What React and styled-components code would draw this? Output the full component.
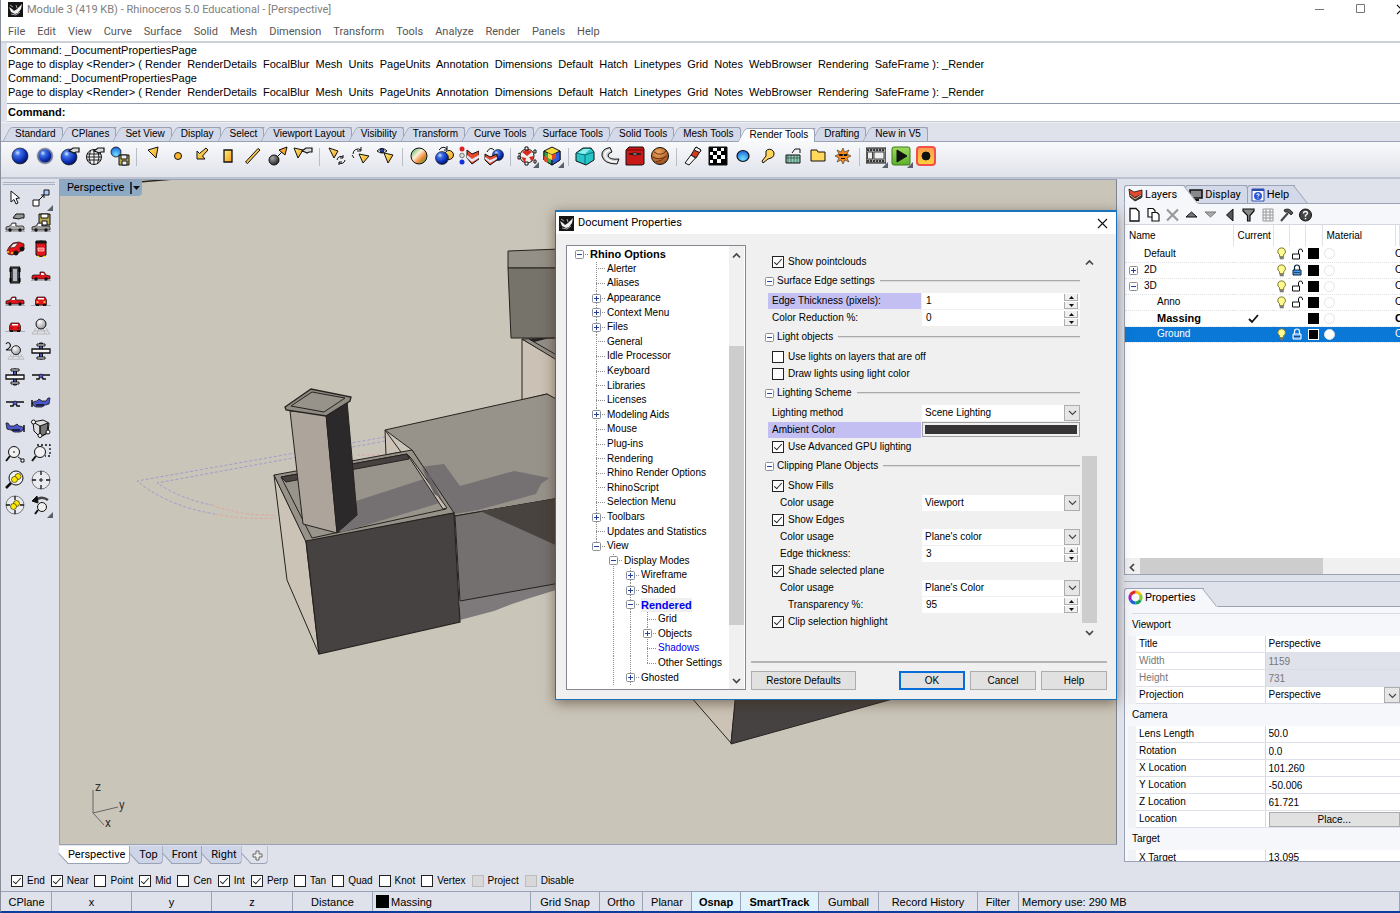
import React from "react";
import styled, { createGlobalStyle, css } from "styled-components";

const UI = `"Liberation Sans", Arial, sans-serif`;
const SYS = `Roboto, "Open Sans", sans-serif`;
const EDGE = "#9aa3b5";
const FACE = "#dfe2ea";

const Global = createGlobalStyle`
  *, *::before, *::after { box-sizing: border-box; }
  html, body { margin: 0; height: 100%; overflow: hidden; }
  #root { height: 100%; }
  button, input, select { font: inherit; color: inherit; margin: 0; padding: 0; border: 0; background: none; border-radius: 0; }
  a { color: inherit; text-decoration: none; }
  ul { list-style: none; margin: 0; padding: 0; }
  table { border-collapse: collapse; border-spacing: 0; }
  svg { display: block; flex: none; }
`;

/* ---------- window frame ---------- */
const Window = styled.div`
  height: 100%;
  display: flex;
  flex-direction: column;
  background: ${FACE};
  border-left: 1px solid #8a8f9c;
  border-bottom: 2px solid #0a3d9e;
  font: 10px/14px ${UI};
  color: #000;
  overflow: hidden;
`;
const TitleBar = styled.header`
  height: 19px;
  display: flex;
  align-items: center;
  gap: 4px;
  padding-left: 7px;
  background: #fff;
  font: 11px/16px ${SYS};
  color: #808080;
`;
const TitleText = styled.span`flex: 1;`;
const Caption = styled.button`
  width: 41px;
  height: 18px;
  display: grid;
  place-items: center;
`;
const Captions = styled.div`display: flex; margin-right: -22px;`;
const MenuBar = styled.nav`
  height: 24px;
  display: flex;
  align-items: center;
  gap: 12px;
  padding: 3px 0 0 7px;
  background: #fff;
  border-bottom: 2px solid #cdd1da;
  font: 11px/16px ${SYS};
  color: #555;
`;
const CommandArea = styled.section`
  height: 79px;
  margin-left: 6px;
  display: flex;
  flex-direction: column;
  background: #fff;
  border-bottom: 1px solid #c5cad6;
  font: 11px/14px ${UI};
`;
const History = styled.div`flex: 1; white-space: pre; padding-left: 1px;`;
const Prompt = styled.label`
  height: 18px;
  display: flex;
  align-items: center;
  border-top: 1px solid #8e98a8;
  padding: 0 0 2px 1px;
  font-weight: bold;
`;
const PromptInput = styled.input`flex: 1; outline: none;`;

/* ---------- toolbar tabs ---------- */
const ToolTabs = styled.div`
  height: 20px;
  display: flex;
  align-items: flex-end;
  padding-left: 5px;
  border-top: 1px solid #eceef3;
  border-bottom: 1px solid ${EDGE};
`;
const ToolTab = styled.button`
  position: relative;
  height: 14px;
  padding: 0 7px 0 9px;
  margin-bottom: ${p => (p.$on ? "-1px" : 0)};
  z-index: ${p => (p.$on ? 1 : 0)};
  font: 10px/14px ${UI};
  white-space: nowrap;
  &::before {
    content: "";
    position: absolute;
    z-index: -1;
    inset: 0 0 0 4px;
    transform: skewX(-28deg);
    transform-origin: 0 0;
    background: ${p => (p.$on ? "#fbfcfd" : "#d3d9e9")};
    border-left: 1px solid ${EDGE};
    border-top: 1px solid ${EDGE};
    border-top-left-radius: 3px;
  }
  &::after {
    content: "";
    position: absolute;
    z-index: -1;
    inset: 0 0 0 auto;
    width: 10px;
    background: ${p => (p.$on ? "#fbfcfd" : "#d3d9e9")};
    border-top: 1px solid ${EDGE};
    border-right: 1px solid ${EDGE};
    border-top-right-radius: 3px;
  }
`;
const Toolbar = styled.div`
  height: 37px;
  display: flex;
  align-items: flex-start;
  padding: 2px 0 0 7px;
  background: linear-gradient(#f8f9fb, #dfe2ea);
  border-bottom: 2px solid #bcc2d0;
`;
const ToolGroup = styled.div`
  display: flex;
  gap: 1px;
  & + & {
    margin-left: 4px;
    padding-left: 5px;
    background: linear-gradient(#b9bdc6, #b9bdc6) 0 4px / 1px 18px no-repeat;
  }
`;
const ToolButton = styled.button`
  position: relative;
  width: 24px;
  height: 24px;
  display: grid;
  place-items: center;
  &::after {
    content: "";
    display: ${p => (p.$fly ? "block" : "none")};
    position: absolute;
    right: 0;
    bottom: 0;
    border: 3px solid transparent;
    border-right-color: #5a5f6b;
    border-bottom-color: #5a5f6b;
  }
`;

/* ---------- body ---------- */
const Body = styled.main`
  flex: 1;
  min-height: 0;
  display: grid;
  grid-template-columns: 58px minmax(0, 1fr) 283px;
`;
const SideBar = styled.aside`padding: 3px 4px 0 2px;`;
const SideGrip = styled.div`height: 3px; border: 1px solid #a9b2c4; border-width: 1px 0;`;
const SideGrid = styled.div`
  height: 333px;
  display: grid;
  grid-template-columns: 24px 24px;
  column-gap: 2px;
  grid-auto-rows: 1fr;
`;
const SideButton = styled(ToolButton)`height: auto;`;
const Stage = styled.section`
  display: flex;
  flex-direction: column;
  min-height: 0;
  position: relative;
`;
const Viewport = styled.div`
  flex: 1;
  min-height: 0;
  position: relative;
  background: #cac5b9;
  border: 1px solid ${EDGE};
  border-right-color: #7f8490;
  overflow: hidden;
`;
const Scene = styled.svg`position: absolute; inset: 0; width: 100%; height: 100%;`;
const ViewportTitle = styled.button`
  position: absolute;
  left: 0;
  top: 0;
  height: 16px;
  display: flex;
  align-items: center;
  gap: 5px;
  padding: 0 1px 0 7px;
  background: #8ea9c4;
  font: 11px/16px ${SYS};
  border-bottom-right-radius: 4px;
`;
const ViewTabs = styled.div`height: 20px; display: flex; padding-top: 1px;`;
const ViewTab = styled.button`
  position: relative;
  height: 18px;
  padding: 0 5px 0 9px;
  font: 11px/18px ${SYS};
  z-index: 0;
  &::before {
    content: "";
    position: absolute;
    z-index: -1;
    inset: 0;
    clip-path: polygon(0 0, 100% 0, 100% 100%, 9px 100%, 0 8px);
    background: ${p => (p.$on ? "#fff" : p.$plus ? FACE : "#ced5e8")};
    border-right: 1px solid ${EDGE};
    border-bottom: 1px solid ${EDGE};
    border-bottom-right-radius: 4px;
  }
  &::after {
    content: "";
    position: absolute;
    left: 0;
    top: 7px;
    width: 14px;
    height: 1px;
    background: ${EDGE};
    transform: rotate(47deg);
    transform-origin: 0 0;
  }
`;

/* ---------- right panels ---------- */
const RightColumn = styled.aside`
  display: flex;
  flex-direction: column;
  padding: 6px 0 3px 7px;
  min-height: 0;
`;
const PanelTabs = styled.div`height: 19px; display: flex; border-bottom: 1px solid ${EDGE};`;
const PanelTab = styled.button`
  position: relative;
  z-index: ${p => (p.$on ? 2 : 1)};
  height: 19px;
  display: flex;
  align-items: center;
  gap: 2px;
  padding: 0 ${p => (p.$on ? 8 : 6)}px 0 4px;
  font: 11px/18px ${SYS};
  &::before {
    content: "";
    position: absolute;
    z-index: -1;
    inset: 0 0 0 0;
    background: ${p => (p.$on ? "#f6f7fa" : "#d3d9e9")};
    border: 1px solid ${EDGE};
    border-width: 1px 0 0 1px;
    border-bottom: 1px solid ${p => (p.$on ? "#f6f7fa" : EDGE)};
    border-radius: 3px 0 0 0;
  }
  &::after {
    content: "";
    position: absolute;
    z-index: -1;
    top: 0;
    right: -6px;
    width: 14px;
    height: 19px;
    background: ${p => (p.$on ? "#f6f7fa" : "#d3d9e9")};
    border-top: 1px solid ${EDGE};
    border-right: 1px solid ${EDGE};
    border-bottom: 1px solid ${p => (p.$on ? "#f6f7fa" : EDGE)};
    transform: skewX(38deg);
  }
`;
const LayerPanel = styled.section`
  height: 371px;
  display: flex;
  flex-direction: column;
  background: #fff;
  border: 1px solid ${EDGE};
  border-width: 0 0 1px 1px;
  overflow: hidden;
`;
const LayerTools = styled.div`
  height: 21px;
  display: flex;
  align-items: center;
  background: #f6f7fa;
  border-bottom: 1px solid #d5d8e0;
`;
const LayerTool = styled.button`width: 19px; height: 18px; display: grid; place-items: center;`;
const LayerTable = styled.table`
  width: 100%;
  table-layout: fixed;
  font: 10px/14px ${UI};
  th { height: 21px; font-weight: normal; text-align: left; padding: 0 4px; border-right: 1px solid #dfe1e6; white-space: nowrap; }
  td { height: 16px; padding: 0; white-space: nowrap; overflow: hidden; border-bottom: 1px dotted #e2e2e2; }
`;
const LayerRow = styled.tr`
  font-weight: ${p => (p.$bold ? "bold" : "normal")};
  font-size: ${p => (p.$bold ? "11px" : "10px")};
  background: ${p => (p.$sel ? "#0a78d7" : "#fff")};
  color: ${p => (p.$sel ? "#fff" : "#000")};
`;
const LayerName = styled.div`
  display: flex;
  align-items: center;
  padding-left: ${p => 4 + p.$depth * 13}px;
  gap: 5px;
`;
const Twist = styled.span`width: 10px; flex: none;`;
const Center = styled.div`display: grid; place-items: center;`;
const Swatch = styled.div`
  width: 11px;
  height: 11px;
  margin: auto;
  background: #000;
  border: ${p => (p.$sel ? "1px solid #fff" : 0)};
`;
const Disc = styled.div`
  width: 11px;
  height: 11px;
  margin-left: 2px;
  border-radius: 50%;
  background: #fff;
  border: 1px solid #e4e4e4;
`;
const HScroll = styled.div`
  height: 16px;
  margin-top: auto;
  display: grid;
  grid-template-columns: 15px 183px 1fr;
  align-items: center;
  background: #f0f0f0;
`;
const ScrollThumb = styled.div`height: 100%; background: #cdcdcd;`;
const PropTabs = styled(PanelTabs)`
  margin-top: 6px;
  height: 26px;
  padding-top: 6px;
  border-top: 1px solid #a9b2c4;
`;
const PropPanel = styled.section`
  flex: 1;
  min-height: 0;
  overflow: hidden;
  padding: 6px 0 0 3px;
  background: #f6f7fa;
  border: 1px solid ${EDGE};
  border-width: 0 0 1px 1px;
`;
const PropTable = styled.table`
  width: 100%;
  table-layout: fixed;
  border-top: 1px solid #d8dce6;
  font: 10px/14px ${UI};
  th { text-align: left; font-weight: normal; padding: 0; }
`;
const GroupHead = styled.th`height: 22px;`;
const PropLabel = styled.th`
  height: 17px;
  border-left: 8px solid #f1f2f6;
  border-bottom: 1px solid #dfe1ea;
  background: #fff;
  color: ${p => (p.$dim ? "#777" : "#000")};
  span { padding-left: 3px; }
`;
const PropValue = styled.td`
  height: 17px;
  padding: 0 0 0 3px;
  border-left: 1px solid #d5d9e4;
  border-bottom: 1px solid ${p => (p.$dim ? "#d9dce6" : "#dfe1ea")};
  background: ${p => (p.$dim ? FACE : "#fff")};
  color: ${p => (p.$dim ? "#777" : "#000")};
`;
const PropInput = styled.input`width: 100%; height: 16px; display: block;`;
const PlaceButton = styled.button`
  display: block;
  width: 100%;
  height: 15px;
  background: #e1e1e1;
  border: 1px solid #adadad;
`;

/* ---------- combo, spinner, tick box ---------- */
const ComboBox = styled.div`
  height: 16px;
  display: grid;
  grid-template-columns: 1fr 16px;
  background: #fff;
`;
const ComboSelect = styled.select`
  appearance: none;
  grid-area: 1 / 1 / 2 / 3;
  padding-left: ${p => p.$pad || 0}px;
  outline: none;
`;
const ComboArrow = styled.span`
  grid-area: 1 / 2;
  pointer-events: none;
  display: grid;
  place-items: center;
  background: #e6e6e6;
  border: 1px solid #adadad;
`;
const Tick = styled.input`
  appearance: none;
  position: relative;
  width: 12px;
  height: 12px;
  flex: none;
  background: ${p => (p.disabled ? "#d8d8d8" : "#fff")};
  border: 1px solid ${p => (p.disabled ? "#bcbcbc" : "#222")};
  &:checked::after {
    content: "";
    position: absolute;
    left: 3px;
    top: 0;
    width: 4px;
    height: 8px;
    border: solid #222;
    border-width: 0 1px 1px 0;
    transform: rotate(42deg);
  }
`;
const TickLabel = styled.label`
  display: flex;
  align-items: center;
  gap: 4px;
  white-space: nowrap;
`;

/* ---------- dialog ---------- */
const Dialog = styled.section`
  position: absolute;
  z-index: 5;
  right: 0;
  top: 31px;
  width: 562px;
  height: 490px;
  display: flex;
  flex-direction: column;
  background: #f0f0f0;
  border: 1px solid #1a73bd;
  border-top-width: 2px;
  box-shadow: 0 3px 12px rgba(60, 40, 20, 0.55);
`;
const DialogTitle = styled.header`
  height: 22px;
  display: flex;
  align-items: center;
  gap: 4px;
  padding: 0 8px 0 3px;
  background: #fff;
  font: 11px/16px ${SYS};
`;
const DialogName = styled.h1`margin: 0; flex: 1; font: inherit;`;
const DialogBody = styled.div`
  flex: 1;
  min-height: 0;
  display: grid;
  grid-template-columns: 180px minmax(0, 1fr);
  gap: 5px;
  padding: 11px 9px 9px 10px;
`;
const TreeBox = styled.div`
  display: grid;
  grid-template-columns: minmax(0, 1fr) 15px;
  background: #fff;
  border: 1px solid #828790;
  overflow: hidden;
  padding-right: 1px;
`;
const Tree = styled.ul`
  height: 438px;
  margin-top: 1px;
  padding-left: 3px;
  display: grid;
  grid-auto-rows: 1fr;
  font: 10px/14px ${UI};
`;
const Branch = styled.li`display: flex; align-items: center; min-height: 0; white-space: nowrap;`;
const dotsV = "repeating-linear-gradient(#8c8c8c 0 1px, transparent 1px 2px)";
const dotsH = "repeating-linear-gradient(90deg, #8c8c8c 0 1px, transparent 1px 2px)";
const Guide = styled.span`
  align-self: stretch;
  width: 17px;
  background: ${p => (p.$line ? `${dotsV} 9px 0 / 1px 100% no-repeat` : "none")};
`;
const Joint = styled.span`
  align-self: stretch;
  width: 20px;
  display: flex;
  align-items: center;
  padding-left: 5px;
  background: ${dotsH} 9px 50% / 9px 1px no-repeat,
    ${dotsV} 9px 0 / 1px ${p => (p.$end ? "50%" : "100%")} no-repeat;
  ${p => p.$root && css`background: ${dotsH} 9px 50% / 9px 1px no-repeat;`}
`;
const Leaf = styled.button`
  line-height: 14px;
  ${p => p.$bold && css`font: bold 11px/14px ${UI};`}
  color: ${p => (p.$blue ? "#0000f0" : "#000")};
  background: ${p => (p.$mark ? "#efefef" : "none")};
`;
const VScroll = styled.div`
  display: grid;
  grid-template-rows: ${p => p.$rows};
  background: #f0f0f0;
`;
const VThumb = styled.div`background: #cdcdcd;`;
const ArrowBox = styled.button`
  display: grid;
  place-items: center;
  width: 100%;
  height: 18px;
  align-self: ${p => (p.$end ? "end" : "start")};
`;

const Page = styled.div`display: flex; flex-direction: column;`;
const Settings = styled.div`
  height: 387px;
  margin-top: 8px;
  display: grid;
  grid-template-columns: minmax(0, 1fr) 15px;
  gap: 2px;
  padding: 0 10px 0 14px;
`;
const SettingsList = styled.div`font: 10px/14px ${UI};`;
const GroupTitle = styled.h2`
  height: 22px;
  margin: 0;
  display: flex;
  align-items: center;
  gap: 3px;
  font: inherit;
  &::after { content: ""; flex: 1; margin-left: 2px; height: 2px; background: #a9a9a9; border-bottom: 1px solid #dcdcdc; }
`;
const SettingRow = styled.div`
  height: 17px;
  display: grid;
  grid-template-columns: 154px minmax(0, 1fr);
  padding-left: 3px;
  align-items: center;
`;
const SettingLabel = styled.label`
  height: 16px;
  line-height: 16px;
  margin-right: 1px;
  padding-left: ${p => 4 + p.$indent * 8}px;
  background: ${p => (p.$mark ? "#c3bff2" : "none")};
`;
const TickRow = styled(TickLabel)`height: 17px; padding-left: 7px;`;
const SpinBox = styled.div`
  height: 16px;
  display: grid;
  grid-template-columns: minmax(0, 1fr) 14px;
  padding-right: 2px;
  background: #fff;
`;
const SpinInput = styled.input`padding-left: 4px; outline: none;`;
const SpinButtons = styled.span`display: grid; grid-template-rows: 7px 7px; gap: 1px; padding-top: 1px;`;
const SpinButton = styled.button`
  display: grid;
  place-items: center;
  background: #f0f0f0;
  border: 1px solid #adadad;
  border-top: 0;
`;
const ColorButton = styled.button`
  height: 15px;
  padding: 2px;
  background: #363435 content-box;
  background-color: #fff;
  border: 1px solid #a0a0a0;
  display: grid;
`;
const ColorFill = styled.span`background: #363435;`;
const Actions = styled.footer`
  margin-top: auto;
  height: 29px;
  display: flex;
  align-items: flex-end;
  gap: 5px;
  border-top: 2px solid #b4b4b4;
`;
const Push = styled.button`
  width: ${p => (p.$wide ? 105 : 66)}px;
  height: 19px;
  background: #e1e1e1;
  border: ${p => (p.$main ? "2px solid #0a6cd6" : "1px solid #adadad")};
  font: 10px/14px ${UI};
  margin-right: ${p => (p.$wide ? "auto" : 0)};
`;

/* ---------- bottom bars ---------- */
const SnapBar = styled.div`
  height: 26px;
  display: flex;
  align-items: center;
  gap: 6px;
  padding: 5px 0 0 10px;
`;
const StatusBar = styled.footer`
  height: 20px;
  display: flex;
  border-top: 1px solid ${EDGE};
  font: 11px/18px ${UI};
  padding-left: 1px;
`;
const Cell = styled.button`
  width: ${p => p.$w}px;
  flex: ${p => (p.$w ? "none" : 1)};
  display: flex;
  align-items: center;
  justify-content: ${p => (p.$left ? "flex-start" : "center")};
  padding-left: ${p => (p.$left ? 3 : 0)}px;
  border-right: 1px solid ${EDGE};
  background: ${p => (p.$on ? "#e0f3fc" : "none")};
  font-weight: ${p => (p.$on ? "bold" : "normal")};
  white-space: nowrap;
`;
const CellSwatch = styled.i`width: 13px; height: 13px; background: #000; margin-right: 2px;`;

/* ---------- drawings ---------- */
const Icon = ({ s = 20, v = 20, children }) => (
  <svg width={s} height={s} viewBox={`0 0 ${v} ${v}`} fill="none" stroke="#111" strokeWidth="1" aria-hidden="true">{children}</svg>
);
const HiddenSvg = styled.svg`position: absolute;`;
const Defs = () => (
  <HiddenSvg width="0" height="0" aria-hidden="true">
    <defs>
      <radialGradient id="blue" cx=".35" cy=".3" r=".75"><stop offset="0" stopColor="#d5e4ff" /><stop offset=".25" stopColor="#3c6fe8" /><stop offset=".7" stopColor="#0b2db0" /><stop offset="1" stopColor="#04104a" /></radialGradient>
      <radialGradient id="sky" cx=".5" cy=".75" r=".8"><stop offset="0" stopColor="#6fe0ff" /><stop offset="1" stopColor="#1257d8" /></radialGradient>
      <radialGradient id="white" cx=".35" cy=".3" r=".8"><stop offset="0" stopColor="#fff" /><stop offset="1" stopColor="#909090" /></radialGradient>
      <radialGradient id="dark" cx=".35" cy=".3" r=".8"><stop offset="0" stopColor="#aaa" /><stop offset="1" stopColor="#151515" /></radialGradient>
      <linearGradient id="rainbow" x2="1" y2="1"><stop offset="0" stopColor="#2fa84a" /><stop offset=".4" stopColor="#fff0d8" /><stop offset=".65" stopColor="#f08a3a" /><stop offset="1" stopColor="#18a020" /></linearGradient>
      <radialGradient id="wood" cx=".4" cy=".3" r=".8"><stop offset="0" stopColor="#f4a860" /><stop offset="1" stopColor="#8b3f12" /></radialGradient>
      <linearGradient id="gold" x2="1" y2="1"><stop offset="0" stopColor="#fff07a" /><stop offset="1" stopColor="#f39a12" /></linearGradient>
      <linearGradient id="play" x2="0" y2="1"><stop offset="0" stopColor="#9edb5b" /><stop offset="1" stopColor="#5cb02c" /></linearGradient>
      <linearGradient id="rec" x2="0" y2="1"><stop offset="0" stopColor="#ff9a50" /><stop offset="1" stopColor="#ffd23a" /></linearGradient>
    </defs>
  </HiddenSvg>
);
const Rhino = ({ s = 15 }) => (
  <Icon s={s} v={15}>
    <rect width="15" height="15" fill="#151515" stroke="none" />
    <path d="M1 5l3 2 2 2 3-2 5-5-1 5-3 4-3 1-4-2z" fill="#f0f0f0" stroke="none" />
    <path d="M8 3l1 3M3 12l5 1 4-3M2 3l3 2" stroke="#a8a8a8" />
  </Icon>
);
const hand = <path d="M9 5l4-3h6v4h-3l-2 1-2-1z" fill="#ddd" strokeWidth="1.2" />;
const cone = <path d="M3 2l9 3-4 7z" fill="url(#gold)" />;
const TOOL = {
  sphere: <circle cx="10" cy="10" r="8" fill="url(#blue)" strokeWidth=".6" />,
  blurSphere: <><circle cx="10" cy="10" r="8.5" fill="#8b93ad" stroke="none" opacity=".5" /><circle cx="10" cy="10" r="7" fill="url(#blue)" stroke="#6a7394" strokeWidth="1.500" /></>,
  handSphere: <><circle cx="9" cy="11" r="8" fill="url(#blue)" strokeWidth=".6" />{hand}</>,
  globe: <><circle cx="9" cy="11" r="7.5" fill="#f2f2f2" /><path d="M2 8h14M1.500 11h15M2 14h14M9 3.500v15M5.500 4.500q-3 6.500 0 13M12.500 4.500q3 6.500 0 13" strokeWidth=".9" />{hand}</>,
  saveSphere: <><circle cx="6" cy="6" r="5" fill="url(#sky)" strokeWidth=".8" /><path d="M9 9h10v10H9z" fill="#b9ab53" /><path d="M11 9h6v4h-6zM12 15h5v4h-5z" fill="#eee" /></>,
  spot: <path d="M5 4l10-3-2 11z" fill="url(#gold)" />,
  point: <circle cx="10" cy="10" r="3.500" fill="#ffb52b" />,
  arrow: <path d="M4 13V5l2.500 2.500L13 2l2 2-5.500 6L12 13z" fill="url(#gold)" />,
  rect: <path d="M6 4h8v12H6z" fill="url(#gold)" strokeWidth="1.300" />,
  line: <path d="M2.500 16L15 2.500 17 4 4.500 17.500z" fill="url(#gold)" />,
  aim: <><circle cx="6" cy="14" r="5" fill="url(#dark)" /><path d="M9 11l6-6" /><path d="M11 4l8-3-2 8z" fill="#ffa52b" /></>,
  coneHand: <><path d="M1 2l9 2-5 8z" fill="url(#gold)" />{hand}</>,
  coneSwap: <>{cone}<path d="M11 14a4 4 0 0 1 6-3M19 14a4 4 0 0 1-6 3M17 9v3h-3M13 19v-3h3" /></>,
  coneTurn: <><path d="M8 8l10 2-6 7z" fill="url(#gold)" /><path d="M2 8a5 5 0 0 1 8-4M3 12l-2-3M10 1v4H6" /></>,
  coneEye: <><path d="M8 7l9 2-5 8z" fill="url(#gold)" /><path d="M1 5q5-5 10 0q-5 4-10 0z" fill="#fff" /><circle cx="6" cy="4.500" r="2" fill="#2344c0" /></>,
  rainbow: <circle cx="10" cy="10" r="8" fill="url(#rainbow)" />,
  pair: <><circle cx="15" cy="9" r="4.500" fill="url(#gold)" /><circle cx="8" cy="12" r="6.500" fill="url(#blue)" strokeWidth=".6" /><path d="M5 4q4-5 8-1M13 0v4h-3" /></>,
  layerDots: <><circle cx="3" cy="3" r="2.500" fill="#e02020" stroke="none" /><circle cx="3" cy="9.500" r="2.300" fill="#ddd" strokeWidth=".5" /><circle cx="3" cy="16" r="2.500" fill="#1030e0" stroke="none" /><path d="M8 4l5 4 7-3v8l-7 5-5-6z" fill="#e8482b" /><path d="M8 9l5 4 7-4v3l-7 4-5-4z" fill="#dfe8f8" stroke="none" /></>,
  layerBall: <><circle cx="14" cy="9" r="5.500" fill="url(#blue)" strokeWidth=".6" /><path d="M1 8l5 3 7-3v6l-7 5-5-5z" fill="#e8482b" /><path d="M1 11l5 3 7-3v2l-7 4-5-4z" fill="#dfe8f8" stroke="none" /><path d="M3 6q3-6 7-2" /></>,
  cage: <><circle cx="10" cy="10" r="7" fill="#eee" /><path d="M5 6l5-3 5 3-5 4zM4 11l5 1-1 5zM12 11l5-1-2 6z" fill="#d92a1c" stroke="none" /><path d="M1 8l2-1M8 1h3v3H8zM17 4h2v3h-2zM1 10h2v3H1zM17 14h2v3h-2zM8 16h3v3H8z" fill="#fff" /></>,
  cube: <><path d="M10 1l8 4v9l-8 5-8-5V5z" fill="#f5d93b" /><path d="M2 5l8 4v10l-8-5z" fill="#3aa54b" /><path d="M10 9l8-4v9l-8 5z" fill="#2d5be0" /><path d="M10 9l4-2v5l-4 2zM2 10l4 2v5l-4-2z" fill="#e04a28" stroke="none" /><path d="M6 7l4 2v5l-4-2z" fill="#f5d93b" stroke="none" /></>,
  cyanBox: <><path d="M1 7l7-5h8l3 4v8l-8 5-10-4z" fill="#27c4c8" /><path d="M1 7l9 2v9M10 9l9-3" stroke="#0b6f78" /><path d="M3 7l6-4h6l-5 5z" fill="#8feef0" stroke="none" /></>,
  pipe: <><path d="M10 1.500Q1 3 2 10q2 8 15 8l2-5q-9 1-11-3 0-3 4-4z" fill="#d0d0d0" /><path d="M10 4q-6 2-5 6 2 6 12 6" stroke="#fff" strokeWidth="1.500" /></>,
  book: <><path d="M1 4l3-3h14l1 2v15l-2 1H1z" fill="#c81818" /><path d="M4 8q6-2 12 0q-6 2-12 0z" fill="#fff" /><path d="M1 4h18" stroke="#700" /></>,
  wood: <><circle cx="10" cy="10" r="8.500" fill="url(#wood)" /><path d="M4 6q7 5 12-1M3 11q6 4 14-1M6 16q6-1 9-5" stroke="#6b2f0c" /></>,
  tube: <><path d="M13 1l5 3-5 8-5-3z" fill="#d9381c" /><path d="M13 1l5 3-1.500 2.500L11 4zM8 9l4.500 3L6 19l-4-2z" fill="#f4f4f4" /></>,
  checker: <><path d="M1 1h18v18H1z" fill="#000" /><path d="M5 2h4v3H5zM13 2h3v3h-3zM9 5h4v4H9zM5 9h4v4H5zM13 9h4v4h-4zM2 6h3v3H2zM2 14h3v3H2zM9 13h4v4H9z" fill="#fff" stroke="none" /></>,
  ellipse: <ellipse cx="10" cy="10" rx="6" ry="5.500" fill="url(#sky)" strokeWidth="1.200" />,
  lamp: <path d="M8 5a4.500 4.500 0 1 1 5 7l-3 1-5 4-1-2 4-5z" fill="#ffd45a" />,
  ground: <><path d="M3 9h14v8H3z" fill="#8fd0b8" /><path d="M3 12h14M5 9v8M8 9v8M11 9v8M14 9v8" strokeWidth=".5" /><path d="M9 7l3-4h5v4" /></>,
  folder: <path d="M3 4h6l1 2h7v9H3z" fill="#ffd85a" />,
  sun: <><path d="M10 2l1.500 4L16 4l-2 4 4 2-4 2 2 4-4-2-2 4-2-4-4 2 2-4-4-2 4-2-2-4 4 2z" fill="#f58a1c" strokeWidth=".5" /><path d="M6.500 8.500h3v1h-3zM11 8.500h3v1h-3z" fill="#111" /><path d="M8 12.500h4" /></>,
  film: <><path d="M0 2h20v15H0z" fill="#aaa" /><path d="M1.500 6h5v7h-5zM8 6h10v7H8z" fill="#eee" stroke="#444" /><path d="M1 4h18M1 15h18" stroke="#111" strokeWidth="1.500" strokeDasharray="2 1" /></>,
  play: <><rect x="1" y="1" width="18" height="18" rx="2" fill="url(#play)" stroke="#3f7a1a" /><path d="M6 4l10 6-10 6z" fill="#111" /></>,
  rec: <><rect x="1" y="1" width="18" height="18" rx="3" fill="url(#rec)" stroke="#f05048" strokeWidth="2" /><circle cx="10" cy="10" r="4" fill="#111" /></>,
};
const TOOL_GROUPS = [
  ["sphere", "blurSphere", "handSphere", "globe", "saveSphere"],
  ["spot", "point", "arrow", "rect", "line", "aim", "coneHand"],
  ["coneSwap", "coneTurn", "coneEye"],
  ["rainbow", "pair", "layerDots", "layerBall"],
  ["cage", "cube"],
  ["cyanBox", "pipe", "book", "wood"],
  ["tube", "checker", "ellipse", "lamp", "ground", "folder", "sun"],
  ["film", "play", "rec"],
];
const FLYOUTS = ["cage", "cube", "film", "play", "moveBox", "undoZoom"];

/* pickup truck seen from the side, cab to the left of the bed */
const car = fill => (
  <>
    <path d="M0 15.500h20" stroke="#888" strokeWidth=".6" />
    <path d="M1 14v-3l4-1 2-3h4v3h7l1 1v3z" fill={fill} strokeWidth=".7" />
    <path d="M7.500 8h2.500v2H6.500z" fill="#fff" stroke="none" />
    <circle cx="5" cy="14" r="1.700" fill="#111" stroke="none" /><circle cx="15" cy="14" r="1.700" fill="#111" stroke="none" />
  </>
);
const carEnd = light => <><path d="M0 15.500h20" stroke="#888" strokeWidth=".6" /><path d="M6 7h8l1.500 3v5h-11v-5z" fill="#e0161c" strokeWidth=".7" /><path d="M7 8h6v1.500H7z" fill="#fff" stroke="none" /><path d="M5 15h3M12 15h3" strokeWidth="2" /><path d="M5.500 12h2M12.500 12h2" stroke={light} strokeWidth="1.500" /></>;
const planeFront = y => <><path d={`M1 ${y}h18M5 ${y + 4}h3l1-3h2l1 3h3`} strokeWidth="1.400" /><circle cx="10" cy={y + 1} r="2" fill="#4a58c8" strokeWidth=".6" /></>;
const planeSide = <><path d="M1 10q2-2 5-2l2-2 3 2h4l2-3h2l-1 6-4 1-3 2H5q-3-1-4-4z" fill="#4a58c8" strokeWidth=".8" /><path d="M1 7v7M5 12h8" strokeWidth="1.500" /></>;
const planeTop = <><path d="M8.500 2h3v16h-3z" fill="#4656c4" /><path d="M1 8h18v4H1z" fill="#f4f4f4" strokeWidth="1.300" /><path d="M6 3h8v2H6zM6 16h8v2H6z" fill="#fff" /></>;
const persp = <><path d="M5 12L1 18h18l-4-6M3 15h14M8 12l-2 6M12 12l2 6" stroke="#aaa" strokeWidth=".7" /><circle cx="10" cy="8" r="5" fill="url(#white)" /></>;
const lens = <><circle cx="9" cy="8" r="5.500" fill="#f1f1f1" /><path d="M5 12l-4 5" strokeWidth="2" /></>;
const target = <><circle cx="10" cy="10" r="9" stroke="#777" fill="#e9ebf0" /><path d="M10 1v4M10 15v4M1 10h4M15 10h4" strokeWidth="1.300" /></>;
const flip = g => <g transform="translate(20 0) scale(-1 1)">{g}</g>;
const SIDE = {
  pointer: <path d="M6 3v11l3-2.500 2 4.500 2-1-2-4.500 3.500-.5z" fill="#fff" />,
  moveBox: <><path d="M2 12h6v6H2z" fill="#fff" /><path d="M13 2h5v5h-5z" fill="#aecbff" /><path d="M8 12l5-5M10 7h3v3" /></>,
  handCar: <><g transform="translate(0 3)">{car("#aaa")}</g><path d="M8 5l3-4h8v4h-3l-2 1z" fill="#999" /></>,
  saveCar: <><path d="M8 1h11v11H8z" fill="#b9ab53" /><path d="M10 1h7v4h-7zM11 8h5v4h-5z" fill="#fff" /><g transform="translate(0 3)">{car("#999")}</g></>,
  carPersp: <><path d="M2 12l2-4 4-4 6-1 5 2v5l-6 4-6 2-4-1z" fill="#e0161c" strokeWidth=".7" /><path d="M8 5l5-1-3 4-5 1z" fill="#fff" strokeWidth=".5" /><circle cx="11" cy="14" r="2" fill="#111" /><circle cx="17" cy="10" r="2" fill="#111" /><path d="M2 13h2M6 14h2" stroke="#fd0" strokeWidth="1.500" /></>,
  carTop: <><path d="M5 3q5-2 10 0v13q-5 3-10 0z" fill="#e0161c" /><path d="M5 2h10v2H5z" fill="#222" /><path d="M7 9h6v3H7z" fill="#f66" stroke="#fff" strokeWidth=".6" /><path d="M6 17.500h2M12 17.500h2" stroke="#fd0" strokeWidth="1.500" /></>,
  carBottom: <><path d="M5.500 2h9v16h-9z" fill="#444" strokeWidth="1.200" /><path d="M8 4h4v12H8z" fill="#b4b8c6" stroke="none" /><path d="M5.500 3v4M14.500 3v4M5.500 13v4M14.500 13v4" stroke="#000" strokeWidth="2" /></>,
  carRight: flip(car("#e0161c")),
  carLeft: flip(flip(car("#e0161c"))),
  carFront: carEnd("#ffe14a"),
  carBack: carEnd("#800"),
  persp,
  persp2: <><g transform="translate(2 2) scale(.9)">{persp}</g><path d="M1 3q2-3 4 0t-4 6h5" strokeWidth="1.200" /></>,
  planeTop,
  planeBottom: <g transform="rotate(180 10 10)">{planeTop}</g>,
  planeFront: planeFront(8),
  planeBack: planeFront(9),
  planeRight: planeSide,
  planeLeft: flip(planeSide),
  boxEdit: <><path d="M2 4l10-2 6 3-1 10-8 4-6-6z" fill="#ddd" /><path d="M9 8l8-3-1 10-7 4z" fill="#777" /><path d="M2 4l7 4v11" /><circle cx="2.500" cy="4" r="2" fill="#fff" /><circle cx="17" cy="14" r="2" fill="#fff" /><circle cx="9" cy="17.500" r="2" fill="#fff" /></>,
  zoomDyn: <>{lens}<path d="M8 8h2M13 13l3 2" /><path d="M16 15h3v3h-3z" fill="#fff" /></>,
  zoomWin: <>{lens}<path d="M6 1h13v11h-5" strokeDasharray="2 2" strokeWidth="1.300" /></>,
  zoomSel: <><circle cx="11" cy="8" r="7" fill="#f1f1f1" /><path d="M6 13l-5 5" strokeWidth="2.500" /><circle cx="13" cy="6.500" r="3" fill="#ffe800" strokeWidth=".6" /><circle cx="9.500" cy="9.500" r="3" fill="#ffe800" strokeWidth=".6" /></>,
  target: <>{target}<path d="M9 9h2v2H9z" /></>,
  targetSel: <>{target}<circle cx="11.500" cy="8.500" r="3" fill="#ffe800" strokeWidth=".6" /><circle cx="8.500" cy="11.500" r="3" fill="#ffe800" strokeWidth=".6" /></>,
  undoZoom: <><circle cx="11" cy="12" r="4.500" fill="#eee" /><path d="M7 15l-3 4" strokeWidth="2" /><path d="M4 6q6-6 13-1" strokeWidth="2.500" stroke="#444" /><path d="M1 6l5-5 1 7z" fill="#111" /></>,
};
const SIDE_ORDER = ["pointer", "moveBox", "handCar", "saveCar", "carPersp", "carTop", "carBottom", "carRight", "carLeft", "carFront", "carBack", "persp", "persp2", "planeTop", "planeBottom", "planeFront", "planeBack", "planeRight", "planeLeft", "boxEdit", "zoomDyn", "zoomWin", "zoomSel", "target", "targetSel", "undoZoom"];

const LAYER_ICONS = {
  "New layer": <path d="M3 1.500h6l3 3V14H3z" fill="#fff" strokeWidth="1.300" />,
  "New sublayer": <><path d="M2 1.500h5l2 2V10H2z" fill="#fff" strokeWidth="1.200" /><path d="M6 5.500h5l2 2V14H6z" fill="#fff" strokeWidth="1.200" /></>,
  "Delete": <path d="M2 2.500l11 11M13 2.500l-11 11" stroke="#999" strokeWidth="2.200" />,
  "Move up": <path d="M2 10l5.500-5 5.500 5z" fill="#777" />,
  "Move down": <path d="M2 5l5.500 5L13 5z" fill="#aaa" stroke="#777" />,
  "Move out": <path d="M11 2v12L4.500 8z" fill="#555" />,
  "Filter": <path d="M2 2h11v2L9 8.500V14H6.500V8.500L2 4z" fill="#888" strokeWidth="1.200" />,
  "Columns": <path d="M3 2h10v12H3zM3 5h10M3 8h10M3 11h10M6 2v12M10 2v12" stroke="#999" />,
  "Tools": <><path d="M9 6l-7 8" strokeWidth="2" stroke="#444" /><path d="M5 3q5-3 9 3l-2 2-3-3-3 0z" fill="#555" strokeWidth=".8" /></>,
  "Help": <><circle cx="7.500" cy="8" r="6" fill="#444" /><path d="M5.500 6.500q0-2 2-2t2 1.800q0 1-2 2v1.400M7.500 11v1.300" stroke="#fff" strokeWidth="1.400" /></>,
};
const Bulb = () => <Icon s={13} v={12}><path d="M6 .8a3.400 3.400 0 0 1 2 6.300V9H4.200V7.100A3.400 3.400 0 0 1 6 .8z" fill="#fffb90" stroke="#77742a" strokeWidth=".9" /><path d="M4.700 9.500h3v1.500h-3z" fill="#999" stroke="#555" strokeWidth=".6" /></Icon>;
const Lock = ({ locked, light }) => (
  <Icon s={12} v={12}>
    {locked
      ? <><path d="M3.500 6V3.500a2.500 2.500 0 0 1 5 0V6" stroke={light ? "#fff" : "#123"} strokeWidth="1.200" /><path d="M2 6h8v5H2z" fill="#4a9cf0" stroke={light ? "#fff" : "#123"} /><path d="M3 8.500h6" stroke="#123" strokeWidth=".7" /></>
      : <><path d="M7.500 6V3a2 2 0 0 1 4 0v1" /><path d="M1.500 6h7v5h-7z" fill="#fff" /></>}
  </Icon>
);
const Expander = ({ open }) => (
  <Icon s={9} v={9}>
    <rect x=".5" y=".5" width="8" height="8" rx="1" fill="#fff" stroke="#8a8f99" />
    <path d={open ? "M2 4.500h5" : "M2 4.500h5M4.500 2v5"} stroke="#2440a0" />
  </Icon>
);
const Chevron = ({ dir = "down", bold }) => {
  const d = { down: "M1 3l3.500 3.500L8 3", up: "M1 6.500L4.500 3 8 6.500", left: "M6 1L2.500 4.500 6 8" }[dir];
  return <Icon s={9} v={9}><path d={d} stroke="#444" strokeWidth={bold ? 1.7 : 1.1} /></Icon>;
};
const CloseX = ({ s = 11 }) => <Icon s={s} v={11}><path d="M1 1l9 9M10 1l-9 9" strokeWidth="1.100" /></Icon>;

const Model = () => (
  <Scene viewBox="60 180 1056 665" preserveAspectRatio="xMinYMin slice" fill="none" stroke="#26221f" strokeWidth="1" aria-label="Rendered massing model">
    <path d="M139 182L174 179" strokeWidth="1.500" />
    <g strokeWidth=".7" strokeDasharray="3 2">
      <path d="M385 437L137 481q30 25 78 33M385 441L157 483q24 16 55 22" stroke="#8d89d8" />
      <path d="M212 505q30 11 64 10M215 514q30 6 61 4M357 455h28" stroke="#e39a90" />
    </g>
    <path d="M460 600L556 583V590L530 598 512 604 494 611 460 620z" fill="#7e7a7b" stroke="none" />
    <path d="M508 251L560 249V268H508z" fill="#949087" />
    <path d="M508 268H560V338H511z" fill="#76736b" />
    <path d="M522 339L560 361V402L547 394 522 400z" fill="#cbc1b4" />
    <path d="M522 339L560 338V362z" fill="#938f87" />
    <path d="M529 339L560 357" />
    <path d="M529 339h17l-12 3z" fill="#222" stroke="none" />
    <path d="M385 430L547 394 560 401V498L455 516 412 450z" fill="#97938b" />
    <path d="M385 430L401 452 386 455z" fill="#ccc3b6" />
    <path d="M420 467L444 464 460 486 514 471 525 473 549 478 541 484 536 494 478 510 455 514z" fill="#757173" stroke="none" />
    <path d="M455 516L560 498V583L460 601z" fill="#73706f" />
    <path d="M480 511L560 498V547z" fill="#48433f" stroke="none" />
    <path d="M274 475L306 541 319 654 287 580z" fill="#ccc3b7" />
    <path d="M274 475L412 450 454 513 306 542z" fill="#969289" />
    <path d="M281 477L407 454 446 509 312 538z" fill="#98948b" />
    <path d="M281 477L407 454 409 459 286 482z" fill="#474241" />
    <path d="M356 501L390 490 430 477 443 502 340 533z" fill="#757173" stroke="none" />
    <path d="M407 454L411 458 447 508 443 509z" fill="#c5bcae" />
    <path d="M422 468L430 476 441 498 434 494z" fill="#686466" stroke="none" />
    <path d="M306 541L454 513 460 622 319 654z" fill="#464241" strokeWidth="1.200" />
    <path d="M290 411L326 414 337 533 303 524z" fill="#ada59c" />
    <path d="M326 414L347 401 357 515 337 533z" fill="#2b292a" />
    <path d="M285 407L311 389 351 397 350 401 326 416 286 410z" fill="#8f8b83" strokeWidth="1.300" />
    <path d="M291 406L312 392 345 398 324 412z" fill="#97938b" />
    <path d="M690 696L736 696 731 743z" fill="#ccc3b6" />
    <path d="M736 690L925 690 731 744z" fill="#464241" />
    <path d="M93 813V790M93 813L118 807M93 813L104 825" stroke="#666" />
    <g fill="#333" stroke="none" fontFamily="Roboto, sans-serif" fontSize="12">
      <text x="95" y="791">z</text><text x="119" y="809">y</text><text x="105" y="827">x</text>
    </g>
  </Scene>
);

/* ---------- data ---------- */
const MENUS = ["File", "Edit", "View", "Curve", "Surface", "Solid", "Mesh", "Dimension", "Transform", "Tools", "Analyze", "Render", "Panels", "Help"];
const TABS = ["Standard", "CPlanes", "Set View", "Display", "Select", "Viewport Layout", "Visibility", "Transform", "Curve Tools", "Surface Tools", "Solid Tools", "Mesh Tools", "Render Tools", "Drafting", "New in V5"];
const PAGE_LINE = "Page to display <Render> ( Render  RenderDetails  FocalBlur  Mesh  Units  PageUnits  Annotation  Dimensions  Default  Hatch  Linetypes  Grid  Notes  WebBrowser  Rendering  SafeFrame ): _Render";
const HISTORY = ["Command: _DocumentPropertiesPage", PAGE_LINE, "Command: _DocumentPropertiesPage", PAGE_LINE];
/* depth, name, box: "+" closed, "-" open */
const TREE = [
  [0, "Rhino Options", "-"], [1, "Alerter"], [1, "Aliases"], [1, "Appearance", "+"], [1, "Context Menu", "+"], [1, "Files", "+"],
  [1, "General"], [1, "Idle Processor"], [1, "Keyboard"], [1, "Libraries"], [1, "Licenses"], [1, "Modeling Aids", "+"], [1, "Mouse"],
  [1, "Plug-ins"], [1, "Rendering"], [1, "Rhino Render Options"], [1, "RhinoScript"], [1, "Selection Menu"], [1, "Toolbars", "+"],
  [1, "Updates and Statistics"], [1, "View", "-"], [2, "Display Modes", "-"], [3, "Wireframe", "+"], [3, "Shaded", "+"], [3, "Rendered", "-"],
  [4, "Grid"], [4, "Objects", "+"], [4, "Shadows"], [4, "Other Settings"], [3, "Ghosted", "+"],
];
const LAYERS = [
  { name: "Default", depth: 0 },
  { name: "2D", depth: 0, box: "+", locked: true },
  { name: "3D", depth: 0, box: "-" },
  { name: "Anno", depth: 1 },
  { name: "Massing", depth: 1, current: true },
  { name: "Ground", depth: 1, locked: true, sel: true },
];
const PROPS = [
  ["Viewport", [["Title", "Perspective"], ["Width", "1159", "dim"], ["Height", "731", "dim"], ["Projection", "Perspective", "combo"]]],
  ["Camera", [["Lens Length", "50.0"], ["Rotation", "0.0"], ["X Location", "101.260"], ["Y Location", "-50.006"], ["Z Location", "61.721"], ["Location", "Place...", "button"]]],
  ["Target", [["X Target", "13.095"]]],
];
const SNAPS = [["End", 1], ["Near", 1], ["Point", 0], ["Mid", 1], ["Cen", 0], ["Int", 1], ["Perp", 1], ["Tan", 0], ["Quad", 0], ["Knot", 0], ["Vertex", 0], ["Project", -1], ["Disable", -1]];
const STATUS = [["CPlane", 50], ["x", 80], ["y", 80], ["z", 81], ["Distance", 80], ["Massing", 158], ["Grid Snap", 69], ["Ortho", 43], ["Planar", 49], ["Osnap", 49], ["SmartTrack", 78], ["Gumball", 60], ["Record History", 99], ["Filter", 41], ["Memory use: 290 MB", 0]];

/* ---------- pieces ---------- */
const Combo = ({ id, value, pad, label }) => (
  <ComboBox>
    <ComboSelect id={id} aria-label={label} defaultValue={value} $pad={pad}><option>{value}</option></ComboSelect>
    <ComboArrow><Chevron /></ComboArrow>
  </ComboBox>
);
const Spinner = ({ id, value }) => (
  <SpinBox>
    <SpinInput id={id} defaultValue={value} />
    <SpinButtons>
      <SpinButton aria-label="Increase"><Icon s={7} v={7}><path d="M1 5l2.500-3L6 5z" fill="#111" stroke="none" /></Icon></SpinButton>
      <SpinButton aria-label="Decrease"><Icon s={7} v={7}><path d="M1 2l2.500 3L6 2z" fill="#111" stroke="none" /></Icon></SpinButton>
    </SpinButtons>
  </SpinBox>
);
const Check = ({ label, on }) => <TickRow><Tick type="checkbox" defaultChecked={on} />{label}</TickRow>;
const Setting = ({ label, indent = 0, mark, id, children }) => (
  <SettingRow><SettingLabel htmlFor={id} $indent={indent} $mark={mark}>{label}</SettingLabel>{children}</SettingRow>
);
const Group = ({ children }) => <GroupTitle><Expander open />{children}</GroupTitle>;
const ScrollBar = ({ rows }) => (
  <VScroll $rows={rows}>
    <ArrowBox aria-label="Scroll up"><Chevron dir="up" bold /></ArrowBox>
    <VThumb />
    <ArrowBox $end aria-label="Scroll down"><Chevron bold /></ArrowBox>
  </VScroll>
);

const OptionTree = () => (
  <TreeBox>
    <Tree>
      {TREE.map(([depth, name, box]) => (
        <Branch key={name}>
          {Array.from({ length: depth }, (_, i) => <Guide key={i} $line={i > 1} />)}
          <Joint $root={depth === 0} $end={name === "View" || name === "Other Settings"}>{box && <Expander open={box === "-"} />}</Joint>
          <Leaf $bold={name === "Rhino Options" || name === "Rendered"} $blue={name === "Rendered" || name === "Shadows"} $mark={name === "Rendered"}>{name}</Leaf>
        </Branch>
      ))}
    </Tree>
    <ScrollBar rows="100px 279px 1fr" />
  </TreeBox>
);

const PropertiesDialog = () => (
  <Dialog role="dialog" aria-label="Document Properties">
    <DialogTitle>
      <Rhino /><DialogName>Document Properties</DialogName>
      <button aria-label="Close"><CloseX /></button>
    </DialogTitle>
    <DialogBody>
      <OptionTree />
      <Page>
        <Settings>
          <SettingsList>
            <Check label="Show pointclouds" on />
            <Group>Surface Edge settings</Group>
            <Setting label="Edge Thickness (pixels):" mark id="edge"><Spinner id="edge" value="1" /></Setting>
            <Setting label="Color Reduction %:" id="reduce"><Spinner id="reduce" value="0" /></Setting>
            <Group>Light objects</Group>
            <Check label="Use lights on layers that are off" />
            <Check label="Draw lights using light color" />
            <Group>Lighting Scheme</Group>
            <Setting label="Lighting method" id="method"><Combo id="method" value="Scene Lighting" pad={3} /></Setting>
            <Setting label="Ambient Color" mark id="ambient"><ColorButton id="ambient"><ColorFill /></ColorButton></Setting>
            <Check label="Use Advanced GPU lighting" on />
            <Group>Clipping Plane Objects</Group>
            <Check label="Show Fills" on />
            <Setting label="Color usage" indent={1} id="fill"><Combo id="fill" value="Viewport" pad={3} /></Setting>
            <Check label="Show Edges" on />
            <Setting label="Color usage" indent={1} id="edgecolor"><Combo id="edgecolor" value="Plane's color" pad={3} /></Setting>
            <Setting label="Edge thickness:" indent={1} id="thick"><Spinner id="thick" value="3" /></Setting>
            <Check label="Shade selected plane" on />
            <Setting label="Color usage" indent={1} id="shade"><Combo id="shade" value="Plane's Color" pad={3} /></Setting>
            <Setting label="Transparency %:" indent={2} id="trans"><Spinner id="trans" value="95" /></Setting>
            <Check label="Clip selection highlight" on />
          </SettingsList>
          <ScrollBar rows="203px 167px 1fr" />
        </Settings>
        <Actions>
          <Push $wide>Restore Defaults</Push>
          <Push $main>OK</Push>
          <Push>Cancel</Push>
          <Push>Help</Push>
        </Actions>
      </Page>
    </DialogBody>
  </Dialog>
);

const Layers = () => (
  <>
    <PanelTabs>
      <PanelTab $on><Icon s={15} v={15}><path d="M1 2l5 3 8-2v7l-7 4-5-4z" fill="#e8482b" strokeWidth=".8" /><path d="M1.500 6l5 4 7-3v4l-6 3-5-4z" fill="#333" stroke="none" /><path d="M2 8l5 4 6-4" stroke="#f0b090" /></Icon>Layers</PanelTab>
      <PanelTab><Icon s={14} v={14}><path d="M1 2h12v8H1z" fill="#888" strokeWidth="1.600" /><path d="M4 12h6" strokeWidth="2" /></Icon>Display</PanelTab>
      <PanelTab><Icon s={14} v={14}><path d="M1 1h12v12H1z" fill="#fff" stroke="#2b4bb0" /><path d="M1 2h12" stroke="#2b4bb0" strokeWidth="2" /><circle cx="7" cy="8" r="4" fill="#2b58d8" stroke="none" /><path d="M5.800 7q0-1.200 1.200-1.200T8.200 7L7 8.300v.5M7 9.800v.8" stroke="#fff" /></Icon>Help</PanelTab>
    </PanelTabs>
    <LayerPanel>
      <LayerTools>
        {Object.entries(LAYER_ICONS).map(([n, d]) => <LayerTool key={n} aria-label={n}><Icon s={15} v={15}>{d}</Icon></LayerTool>)}
      </LayerTools>
      <LayerTable>
        <colgroup><col width="108" /><col width="40" /><col width="16" /><col width="16" /><col width="17" /><col width="73" /><col /></colgroup>
        <thead><tr><th>Name</th><th>Current</th><th /><th /><th /><th>Material</th><th /></tr></thead>
        <tbody>
          {LAYERS.map(l => (
            <LayerRow key={l.name} $bold={l.current} $sel={l.sel}>
              <td><LayerName $depth={l.depth}><Twist>{l.box && <Expander open={l.box === "-"} />}</Twist>{l.name}</LayerName></td>
              <td>{l.current && <Center><Icon s={11} v={11}><path d="M1 6l3 3 6-7" strokeWidth="1.800" /></Icon></Center>}</td>
              <td>{!l.current && <Center><Bulb /></Center>}</td>
              <td>{!l.current && <Center><Lock locked={l.locked} light={l.sel} /></Center>}</td>
              <td><Swatch $sel={l.sel} /></td>
              <td><Disc /></td>
              <td>C</td>
            </LayerRow>
          ))}
        </tbody>
      </LayerTable>
      <HScroll><ArrowBox aria-label="Scroll left"><Chevron dir="left" bold /></ArrowBox><ScrollThumb /></HScroll>
    </LayerPanel>
  </>
);

const Properties = () => (
  <>
    <PropTabs>
      <PanelTab $on>
        <Icon s={15} v={15}>
          <g strokeWidth="3"><path d="M7.500 2A5.500 5.500 0 0 1 12.300 4.800" stroke="#f5c518" /><path d="M12.300 4.800A5.500 5.500 0 0 1 12.300 10.200" stroke="#8bc926" /><path d="M12.300 10.200A5.500 5.500 0 0 1 7.500 13" stroke="#18a05a" /><path d="M7.500 13A5.500 5.500 0 0 1 2.700 10.200" stroke="#1c62d8" /><path d="M2.700 10.200A5.500 5.500 0 0 1 2.700 4.800" stroke="#a020c0" /><path d="M2.700 4.800A5.500 5.500 0 0 1 7.500 2" stroke="#e02828" /></g>
        </Icon>Properties
      </PanelTab>
    </PropTabs>
    <PropPanel>
      <PropTable>
        <colgroup><col width="133" /><col /></colgroup>
        {PROPS.map(([group, rows]) => (
          <tbody key={group}>
            <tr><GroupHead colSpan={2}>{group}</GroupHead></tr>
            {rows.map(([name, value, kind]) => (
              <tr key={name}>
                <PropLabel $dim={kind === "dim"}><span>{name}</span></PropLabel>
                <PropValue $dim={kind === "dim"}>
                  {kind === "combo" ? <Combo value={value} label={name} /> : kind === "button" ? <PlaceButton>{value}</PlaceButton> : <PropInput aria-label={name} defaultValue={value} readOnly={kind === "dim"} />}
                </PropValue>
              </tr>
            ))}
          </tbody>
        ))}
      </PropTable>
    </PropPanel>
  </>
);

export default function App() {
  return (
    <Window>
      <Global />
      <Defs />
      <TitleBar>
        <Rhino />
        <TitleText>Module 3 (419 KB) - Rhinoceros 5.0 Educational - [Perspective]</TitleText>
        <Captions>
          <Caption aria-label="Minimize"><Icon s={11} v={11}><path d="M1 5.500h9" stroke="#777" /></Icon></Caption>
          <Caption aria-label="Maximize"><Icon s={11} v={11}><path d="M1.500 .5h8v8h-8z" stroke="#777" /></Icon></Caption>
          <Caption aria-label="Close"><CloseX /></Caption>
        </Captions>
      </TitleBar>
      <MenuBar>{MENUS.map(m => <a key={m} href={`#${m}`}>{m}</a>)}</MenuBar>
      <CommandArea>
        <History>{HISTORY.join("\n")}</History>
        <Prompt>Command:<PromptInput /></Prompt>
      </CommandArea>
      <ToolTabs>{TABS.map(t => <ToolTab key={t} $on={t === "Render Tools"}>{t}</ToolTab>)}</ToolTabs>
      <Toolbar>
        {TOOL_GROUPS.map(g => (
          <ToolGroup key={g[0]}>
            {g.map(n => <ToolButton key={n} aria-label={n} $fly={FLYOUTS.includes(n)}><Icon>{TOOL[n]}</Icon></ToolButton>)}
          </ToolGroup>
        ))}
      </Toolbar>
      <Body>
        <SideBar>
          <SideGrip />
          <SideGrid>{SIDE_ORDER.map(n => <SideButton key={n} aria-label={n} $fly={FLYOUTS.includes(n)}><Icon>{SIDE[n]}</Icon></SideButton>)}</SideGrid>
        </SideBar>
        <Stage>
          <Viewport>
            <Model />
            <ViewportTitle>Perspective<Icon s={12} v={12}><path d="M2 0v12" strokeWidth="1.500" /><path d="M4 4h7l-3.500 4z" fill="#111" stroke="none" /></Icon></ViewportTitle>
          </Viewport>
          <ViewTabs>
            {["Perspective", "Top", "Front", "Right"].map(t => <ViewTab key={t} $on={t === "Perspective"}>{t}</ViewTab>)}
            <ViewTab $plus aria-label="New viewport"><Icon s={12} v={12}><path d="M5 2h3v3h3v3H8v3H5V8H2V5h3z" fill="#eee" stroke="#666" /></Icon></ViewTab>
          </ViewTabs>
          <PropertiesDialog />
        </Stage>
        <RightColumn>
          <Layers />
          <Properties />
        </RightColumn>
      </Body>
      <SnapBar>
        {SNAPS.map(([n, s]) => <TickLabel key={n}><Tick type="checkbox" defaultChecked={s === 1} disabled={s < 0} />{n}</TickLabel>)}
      </SnapBar>
      <StatusBar>
        {STATUS.map(([n, w]) => (
          <Cell key={n} $w={w} $on={n === "Osnap" || n === "SmartTrack"} $left={n === "Massing" || !w}>{n === "Massing" && <CellSwatch />}{n}</Cell>
        ))}
      </StatusBar>
    </Window>
  );
}
